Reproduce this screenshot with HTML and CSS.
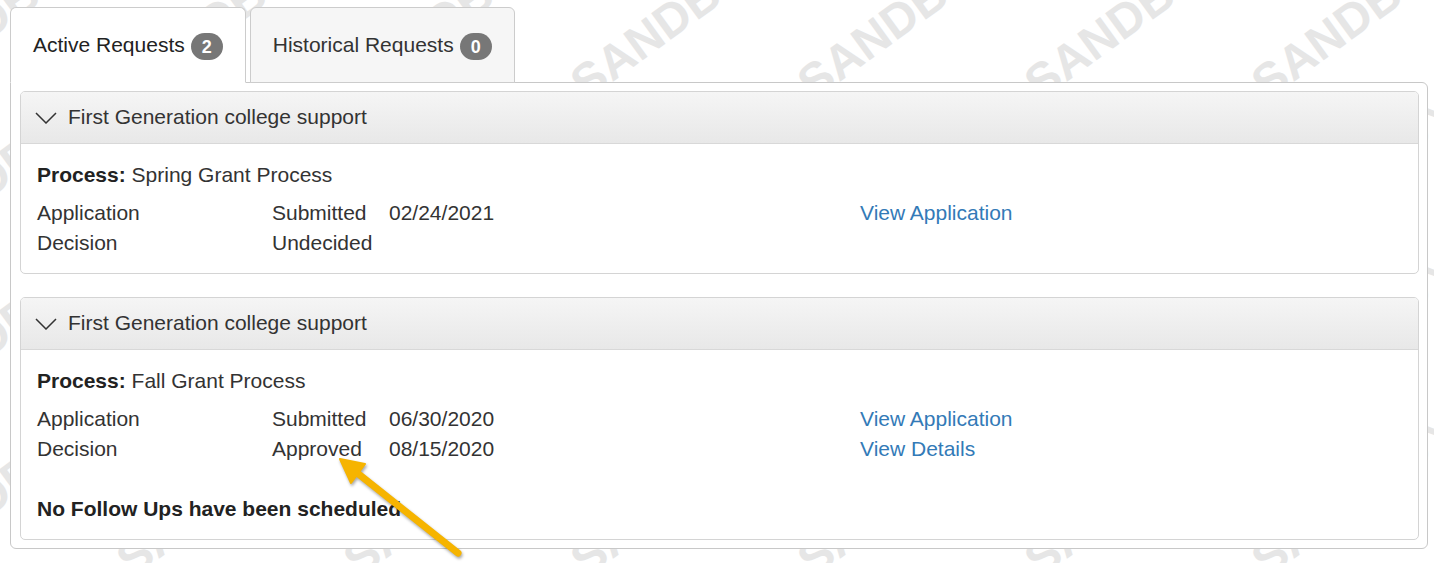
FILE: index.html
```html
<!DOCTYPE html>
<html lang="en">
<head>
<meta charset="utf-8">
<title>Requests</title>
<link rel="stylesheet" href="styles.css">
</head>
<body>
<div class="watermark" aria-hidden="true">
  <div class="wm-grid">
    <div class="wm-row"><span>SANDBOX</span><span>SANDBOX</span><span>SANDBOX</span><span>SANDBOX</span><span>SANDBOX</span><span>SANDBOX</span><span>SANDBOX</span><span>SANDBOX</span></div>
    <div class="wm-row"><span>SANDBOX</span><span>SANDBOX</span><span>SANDBOX</span><span>SANDBOX</span><span>SANDBOX</span><span>SANDBOX</span><span>SANDBOX</span><span>SANDBOX</span></div>
    <div class="wm-row"><span>SANDBOX</span><span>SANDBOX</span><span>SANDBOX</span><span>SANDBOX</span><span>SANDBOX</span><span>SANDBOX</span><span>SANDBOX</span><span>SANDBOX</span></div>
    <div class="wm-row"><span>SANDBOX</span><span>SANDBOX</span><span>SANDBOX</span><span>SANDBOX</span><span>SANDBOX</span><span>SANDBOX</span><span>SANDBOX</span><span>SANDBOX</span></div>
  </div>
</div>

<div class="page">
  <ul class="tabs">
    <li class="tab active"><span>Active Requests</span><span class="badge">2</span></li>
    <li class="tab"><span>Historical Requests</span><span class="badge">0</span></li>
  </ul>

  <div class="tab-content">
    <div class="panel">
      <div class="panel-heading">
        <svg class="chevron" width="22" height="12" viewBox="0 0 22 12"><path d="M1 1 L11 11 L21 1" fill="none" stroke="#333" stroke-width="1.5"/></svg>
        <span>First Generation college support</span>
      </div>
      <div class="panel-body">
        <div class="process"><b>Process:</b> Spring Grant Process</div>
        <div class="rows">
          <span>Application</span><span>Submitted</span><span>02/24/2021</span><a href="#" class="link">View Application</a>
          <span>Decision</span><span>Undecided</span><span></span><span></span>
        </div>
      </div>
    </div>

    <div class="panel">
      <div class="panel-heading">
        <svg class="chevron" width="22" height="12" viewBox="0 0 22 12"><path d="M1 1 L11 11 L21 1" fill="none" stroke="#333" stroke-width="1.5"/></svg>
        <span>First Generation college support</span>
      </div>
      <div class="panel-body">
        <div class="process"><b>Process:</b> Fall Grant Process</div>
        <div class="rows">
          <span>Application</span><span>Submitted</span><span>06/30/2020</span><a href="#" class="link">View Application</a>
          <span>Decision</span><span>Approved</span><span>08/15/2020</span><a href="#" class="link">View Details</a>
        </div>
        <div class="followups">No Follow Ups have been scheduled</div>
      </div>
    </div>
  </div>
</div>

<svg class="arrow" width="1434" height="563" viewBox="0 0 1434 563" aria-hidden="true">
  <g class="arrow-shape">
    <line x1="458" y1="553" x2="356" y2="472" stroke="#f6b400" stroke-width="7" stroke-linecap="round"/>
    <polygon points="340,459 365,464 351,483" fill="#f6b400" stroke="#f6b400" stroke-width="2" stroke-linejoin="round"/>
  </g>
</svg>
</body>
</html>
```

FILE: styles.css
```css
html, body {
  margin: 0;
  padding: 0;
}

body {
  position: relative;
  width: 1434px;
  height: 563px;
  overflow: hidden;
  background: #fff;
  font-family: "Liberation Sans", Arial, sans-serif;
  font-size: 21px;
  line-height: 30px;
  color: #333;
}

/* background watermark */
.watermark {
  position: absolute;
  left: 0;
  top: 0;
  width: 1434px;
  height: 563px;
  overflow: hidden;
  z-index: 0;
}

.wm-grid {
  display: flex;
  flex-direction: column;
  margin: -62px 0 0 -121px;
}

.wm-row {
  display: flex;
  height: 159px;
}

.wm-row span {
  flex: none;
  width: 227px;
  height: 159px;
  display: flex;
  align-items: center;
  justify-content: center;
  font-weight: bold;
  font-size: 48px;
  line-height: 1;
  color: #e6e6e6;
  transform: rotate(-36deg);
}

.page {
  position: relative;
  z-index: 1;
  padding: 7px 0 0 10px;
}

/* tabs */
.tabs {
  display: flex;
  gap: 4px;
  list-style: none;
  margin: 0 0 -1px 0;
  padding: 0;
  position: relative;
  z-index: 2;
}

.tab {
  display: flex;
  align-items: center;
  gap: 6px;
  height: 30px;
  padding: 22px;
  border: 1px solid #ccc;
  border-radius: 6px 6px 0 0;
  background: #f6f6f6;
  color: #333;
  white-space: nowrap;
}

.tab.active {
  background: #fff;
  border-bottom-color: #fff;
  color: #222;
}

.badge {
  display: block;
  padding: 5px 11px 4px;
  border-radius: 14px;
  background: #777;
  color: #fff;
  font-size: 18px;
  font-weight: bold;
  line-height: 18px;
  margin-top: 2px;
}

/* content */
.tab-content {
  width: 1418px;
  box-sizing: border-box;
  border: 1px solid #c8c8c8;
  border-radius: 0 6px 6px 6px;
  background: #fff;
  padding: 8px 8px 8px 9px;
  display: flex;
  flex-direction: column;
  gap: 23px;
}

.panel {
  border: 1px solid #d4d4d4;
  border-radius: 5px;
  background: #fff;
  overflow: hidden;
}

.panel-heading {
  display: flex;
  align-items: center;
  padding: 10px 14px 11px;
  background: linear-gradient(to bottom, #f5f5f5 0%, #e8e8e8 100%);
  border-bottom: 1px solid #d8d8d8;
  color: #333;
}

.chevron {
  flex: none;
  margin-right: 11px;
  margin-top: 2px;
}

.panel-body {
  padding: 16px 16px 15px;
}

.process b {
  font-weight: bold;
  color: #222;
}

.rows {
  margin-top: 8px;
  display: grid;
  grid-template-columns: 235px 117px 471px 1fr;
}

.link {
  color: #337ab7;
  text-decoration: none;
  justify-self: start;
}

.followups {
  margin-top: 30px;
  font-weight: bold;
  color: #222;
}

/* annotation arrow */
.arrow {
  position: absolute;
  left: 0;
  top: 0;
  z-index: 3;
  pointer-events: none;
}

.arrow-shape {
  filter: drop-shadow(1px 2px 1.5px rgba(0, 0, 0, 0.35));
}
```
